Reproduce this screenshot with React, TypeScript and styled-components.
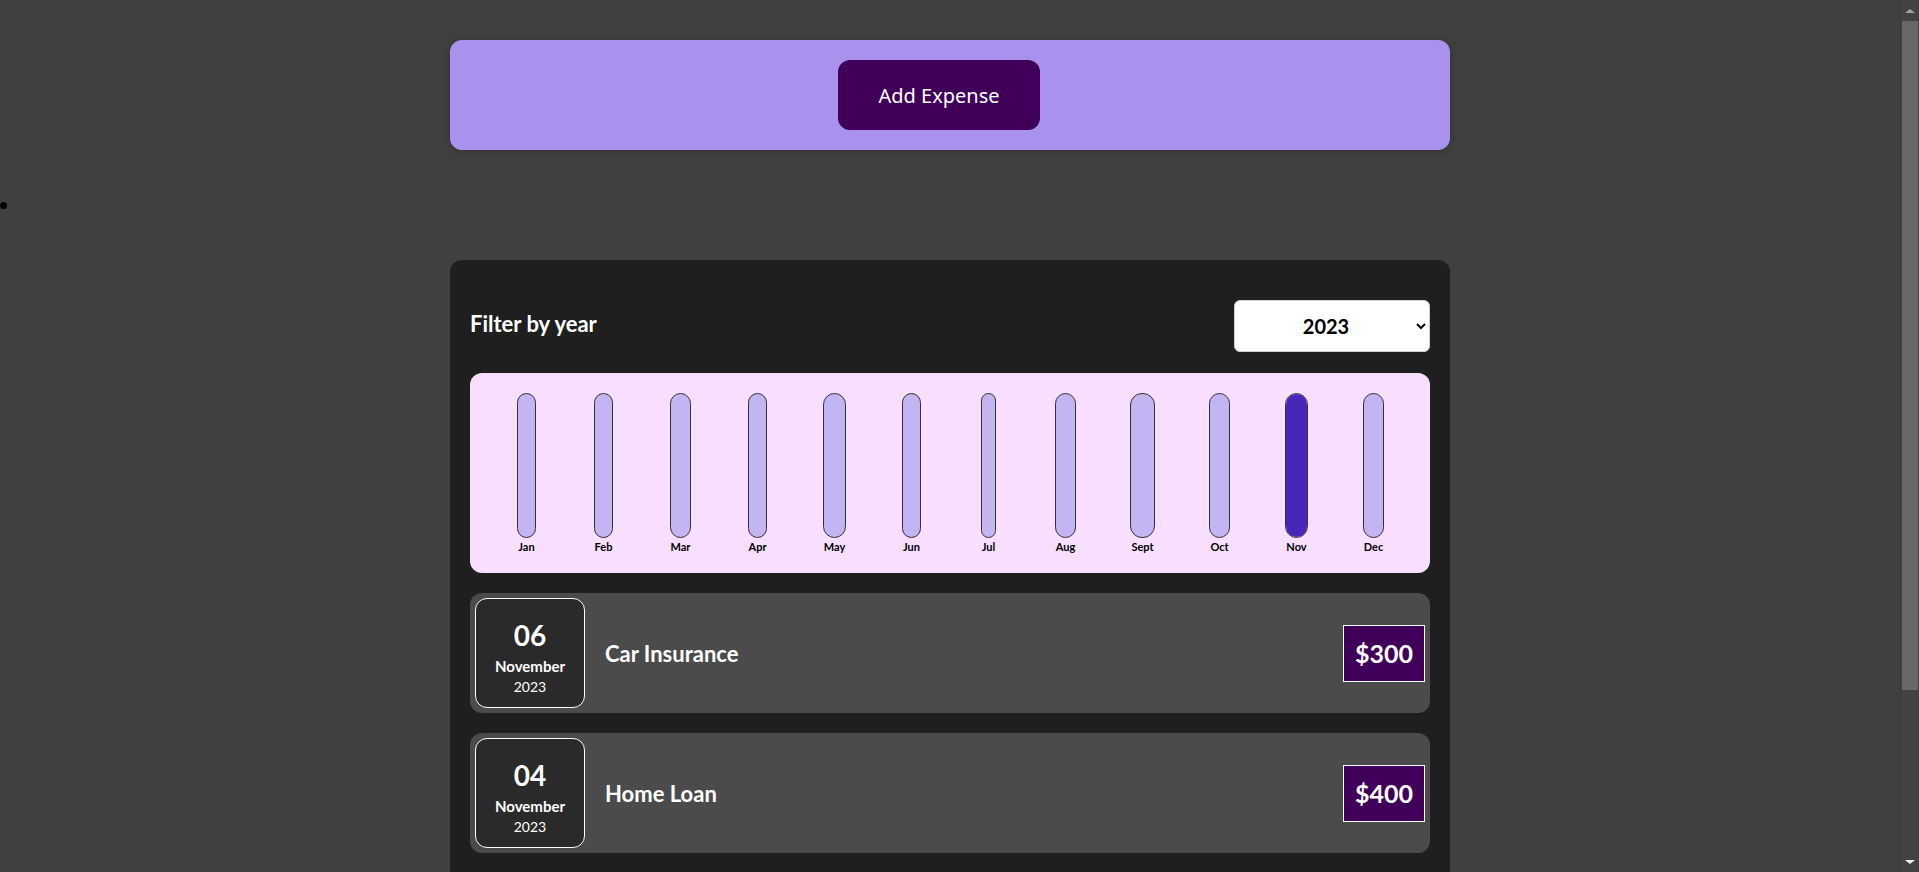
import React from "react";
import styled, { createGlobalStyle } from "styled-components";

const GlobalStyle = createGlobalStyle`
  html, body {
    margin: 0;
    background: #404040;
    overflow: hidden;
  }
  body {
    font-family: "Noto Sans", "Open Sans", Arial, sans-serif;
    color: #fff;
  }
`;

const Frame = styled.div`
  display: flex;
  height: 100vh;
  overflow: hidden;
`;

const Viewport = styled.main`
  flex: 1;
  min-width: 0;
  overflow: hidden;
`;

const ScrollRail = styled.div`
  width: 19px;
  flex: 0 0 19px;
  display: flex;
  flex-direction: column;
  align-items: stretch;
  background: #424242;
  border-left: 1px solid #3a3a3a;
  box-sizing: border-box;
`;

const RailButton = styled.div`
  height: 21px;
  display: flex;
  align-items: center;
  justify-content: center;
`;

const ArrowUp = styled.span`
  width: 0;
  height: 0;
  border-left: 5px solid transparent;
  border-right: 5px solid transparent;
  border-bottom: 4px solid #a3a3a3;
`;

const ArrowDown = styled.span`
  width: 0;
  height: 0;
  border-left: 5px solid transparent;
  border-right: 5px solid transparent;
  border-top: 4px solid #f0f0f0;
`;

const Thumb = styled.div`
  height: 669px;
  margin: 0 1px;
  background: #686868;
`;

const RailSpace = styled.div`
  flex: 1;
`;

const Page = styled.div`
  display: flex;
  flex-direction: column;
  align-items: center;
  padding-top: 40px;
`;

const NewExpenseCard = styled.div`
  box-sizing: border-box;
  width: 1000px;
  height: 110px;
  padding: 20px 42px 20px 20px;
  display: flex;
  justify-content: center;
  align-items: center;
  background: #a892ed;
  border-radius: 12px;
  box-shadow: 0 1px 8px rgba(0, 0, 0, 0.25);
`;

const AddButton = styled.button`
  height: 70px;
  padding: 0 34px;
  min-width: 202px;
  border: none;
  border-radius: 12px;
  background: #40005a;
  color: #fff;
  font-family: "Noto Sans", "Open Sans", Arial, sans-serif;
  font-size: 20px;
  cursor: pointer;
`;

const BulletRow = styled.ul`
  align-self: stretch;
  height: 110px;
  margin: 0;
  padding: 0;
  list-style: none;
  display: flex;
  align-items: center;
`;

const Bullet = styled.li`
  width: 7px;
  height: 7px;
  border-radius: 50%;
  background: #000;
`;

const ExpensesCard = styled.section`
  box-sizing: border-box;
  width: 1000px;
  padding: 40px 20px 160px;
  background: #1f1f1f;
  border-radius: 12px;
  font-family: Lato, "Noto Sans", Arial, sans-serif;
`;

const FilterRow = styled.div`
  display: flex;
  justify-content: space-between;
  align-items: center;
  margin-bottom: 21px;
`;

const FilterLabel = styled.label`
  padding-bottom: 6px;
  font-size: 22px;
  font-weight: 700;
  color: #fff;
`;

const YearSelect = styled.select`
  box-sizing: border-box;
  width: 196px;
  height: 52px;
  padding: 0 8px;
  border: 1px solid #cfcfcf;
  border-radius: 6px;
  background: #fff;
  color: #000;
  font-family: Lato, "Noto Sans", Arial, sans-serif;
  font-size: 20px;
  font-weight: 700;
  text-align: center;
  text-align-last: center;
`;

const Chart = styled.div`
  box-sizing: border-box;
  height: 200px;
  padding: 20px 18px;
  background: #f8dfff;
  border-radius: 12px;
  display: grid;
  grid-template-columns: repeat(12, 1fr);
  justify-items: center;
`;

const BarColumn = styled.div`
  height: 100%;
  display: flex;
  flex-direction: column;
  align-items: stretch;
`;

const BarTrack = styled.div`
  flex: 1;
  box-sizing: border-box;
  border: 1px solid #313131;
  border-radius: 12px;
  background: #c3b4f2;
  overflow: hidden;
  display: flex;
  flex-direction: column;
  justify-content: flex-end;
`;

const BarFill = styled.div`
  background: #4826b9;
  width: 100%;
`;

const BarLabel = styled.div`
  margin-top: 2px;
  padding: 0 1px;
  font-size: 11px;
  line-height: 13px;
  font-weight: 700;
  color: #000;
  text-align: center;
`;

const ItemList = styled.ul`
  margin: 0;
  padding: 0;
  list-style: none;
`;

const Item = styled.li`
  margin-top: 20px;
  padding: 5px;
  display: flex;
  align-items: center;
  gap: 20px;
  background: #4b4b4b;
  border-radius: 12px;
`;

const DateBox = styled.div`
  box-sizing: border-box;
  width: 110px;
  height: 110px;
  padding-bottom: 10px;
  border: 1px solid #fff;
  border-radius: 12px;
  background: #2a2a2a;
  color: #fff;
  display: flex;
  flex-direction: column;
  align-items: center;
  justify-content: flex-end;
`;

const Day = styled.div`
  font-size: 28px;
  line-height: 32px;
  font-weight: 700;
`;

const Month = styled.div`
  margin-top: 5px;
  font-size: 15px;
  line-height: 20px;
  font-weight: 700;
`;

const Year = styled.div`
  margin-top: 1px;
  font-size: 14px;
  line-height: 20px;
`;

const Title = styled.h2`
  flex: 1;
  margin: 0;
  font-size: 22px;
  font-weight: 700;
  color: #fff;
`;

const Price = styled.div`
  padding: 12px 11px;
  border: 1px solid #fff;
  background: #40005a;
  color: #fff;
  font-size: 25px;
  line-height: 31px;
  font-weight: 700;
`;

const months = ["Jan", "Feb", "Mar", "Apr", "May", "Jun", "Jul", "Aug", "Sept", "Oct", "Nov", "Dec"];

const expenses = [
  { day: "06", title: "Car Insurance", amount: 300 },
  { day: "04", title: "Home Loan", amount: 400 },
];

const monthTotals = months.map((_, i) =>
  i === 10 ? expenses.reduce((s, e) => s + e.amount, 0) : 0
);
const maxTotal = Math.max(...monthTotals);

export default function App() {
  return (
    <>
      <GlobalStyle />
      <Frame>
        <Viewport>
          <Page>
            <NewExpenseCard>
              <AddButton>Add Expense</AddButton>
            </NewExpenseCard>
            <BulletRow>
              <Bullet />
            </BulletRow>
            <ExpensesCard>
              <FilterRow>
                <FilterLabel>Filter by year</FilterLabel>
                <YearSelect defaultValue="2023">
                  <option value="2024">2024</option>
                  <option value="2023">2023</option>
                  <option value="2022">2022</option>
                  <option value="2021">2021</option>
                </YearSelect>
              </FilterRow>
              <Chart>
                {months.map((m, i) => (
                  <BarColumn key={m}>
                    <BarTrack>
                      <BarFill style={{ height: `${(monthTotals[i] / maxTotal) * 100}%` }} />
                    </BarTrack>
                    <BarLabel>{m}</BarLabel>
                  </BarColumn>
                ))}
              </Chart>
              <ItemList>
                {expenses.map((e, i) => (
                  <Item key={i}>
                    <DateBox>
                      <Day>{e.day}</Day>
                      <Month>November</Month>
                      <Year>2023</Year>
                    </DateBox>
                    <Title>{e.title}</Title>
                    <Price>${e.amount}</Price>
                  </Item>
                ))}
              </ItemList>
            </ExpensesCard>
          </Page>
        </Viewport>
        <ScrollRail>
          <RailButton>
            <ArrowUp />
          </RailButton>
          <Thumb />
          <RailSpace />
          <RailButton>
            <ArrowDown />
          </RailButton>
        </ScrollRail>
      </Frame>
    </>
  );
}
